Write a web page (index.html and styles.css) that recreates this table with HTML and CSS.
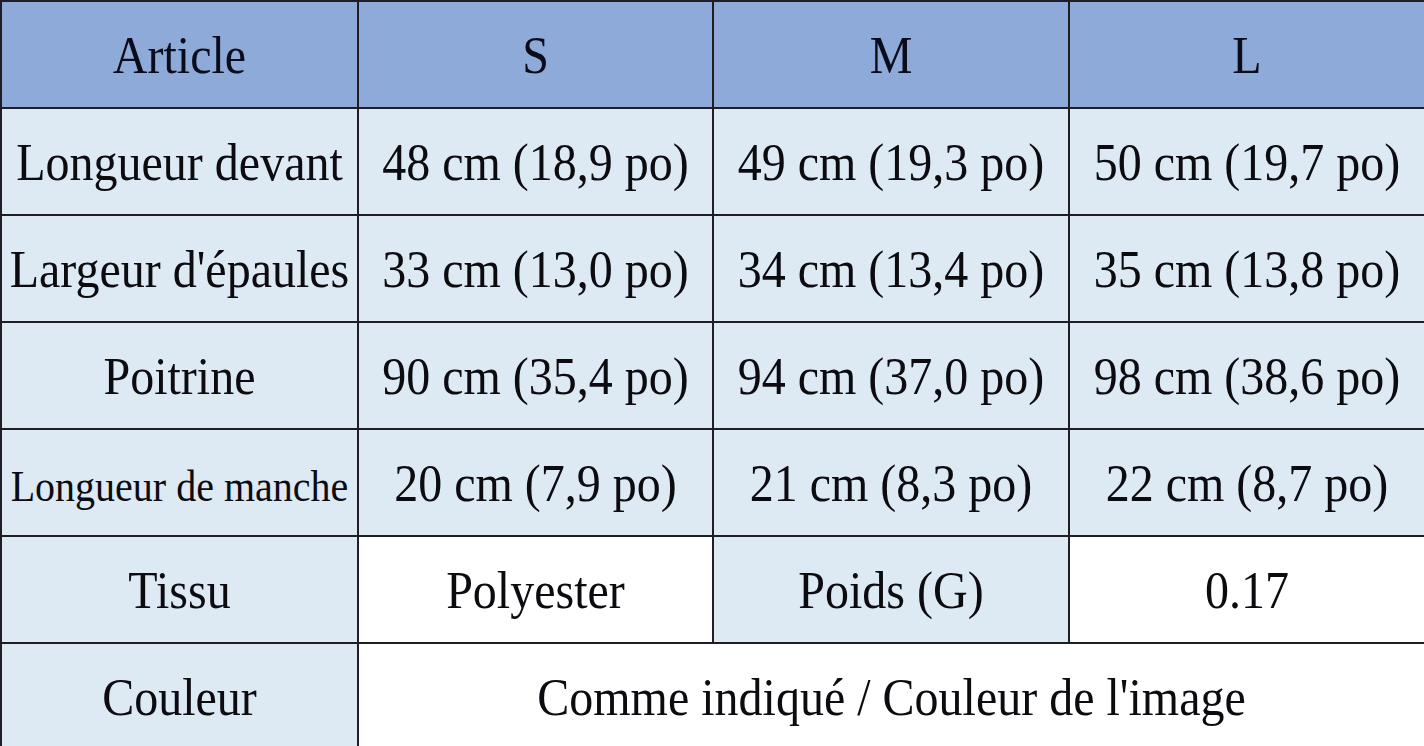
FILE: index.html
```html
<!DOCTYPE html>
<html lang="fr">
<head>
<meta charset="utf-8">
<title>Tableau des tailles</title>
<link rel="stylesheet" href="styles.css">
</head>
<body>
<table class="sizes">
  <colgroup>
    <col class="c1"><col class="c2"><col class="c3"><col class="c4">
  </colgroup>
  <tr class="head">
    <th><span class="t">Article</span></th>
    <th><span class="t">S</span></th>
    <th><span class="t">M</span></th>
    <th><span class="t">L</span></th>
  </tr>
  <tr>
    <td><span class="t">Longueur devant</span></td>
    <td><span class="t">48 cm (18,9 po)</span></td>
    <td><span class="t">49 cm (19,3 po)</span></td>
    <td><span class="t">50 cm (19,7 po)</span></td>
  </tr>
  <tr>
    <td><span class="t">Largeur d'épaules</span></td>
    <td><span class="t">33 cm (13,0 po)</span></td>
    <td><span class="t">34 cm (13,4 po)</span></td>
    <td><span class="t">35 cm (13,8 po)</span></td>
  </tr>
  <tr>
    <td><span class="t">Poitrine</span></td>
    <td><span class="t">90 cm (35,4 po)</span></td>
    <td><span class="t">94 cm (37,0 po)</span></td>
    <td><span class="t">98 cm (38,6 po)</span></td>
  </tr>
  <tr>
    <td><span class="t small">Longueur de manche</span></td>
    <td><span class="t">20 cm (7,9 po)</span></td>
    <td><span class="t">21 cm (8,3 po)</span></td>
    <td><span class="t">22 cm (8,7 po)</span></td>
  </tr>
  <tr>
    <td><span class="t">Tissu</span></td>
    <td class="white"><span class="t">Polyester</span></td>
    <td><span class="t">Poids (G)</span></td>
    <td class="white"><span class="t">0.17</span></td>
  </tr>
  <tr>
    <td><span class="t">Couleur</span></td>
    <td class="white" colspan="3"><span class="t">Comme indiqué / Couleur de l'image</span></td>
  </tr>
</table>
</body>
</html>
```
FILE: styles.css
```css
html, body {
  margin: 0;
  padding: 0;
  background: #ffffff;
}

.sizes {
  width: 1424px;
  height: 746px;
  border-collapse: collapse;
  table-layout: fixed;
  font-family: "Liberation Serif", "Times New Roman", serif;
  font-size: 48px;
  color: #0b0b10;
}

.c1 { width: 357px; }
.c2 { width: 355px; }
.c3 { width: 356px; }
.c4 { width: 356px; }

.sizes th,
.sizes td {
  border: 2px solid #1e1e24;
  background: #dde9f3;
  text-align: center;
  vertical-align: middle;
  padding: 0;
  font-weight: normal;
  white-space: nowrap;
}

.sizes tr {
  height: 107px;
}

.sizes .head th {
  background: #8eaad9;
  color: #0a0c1c;
}

.sizes td.white {
  background: #ffffff;
}

.t {
  display: inline-block;
  transform: scaleY(1.12);
}

.t.small {
  font-size: 40px;
}
```
